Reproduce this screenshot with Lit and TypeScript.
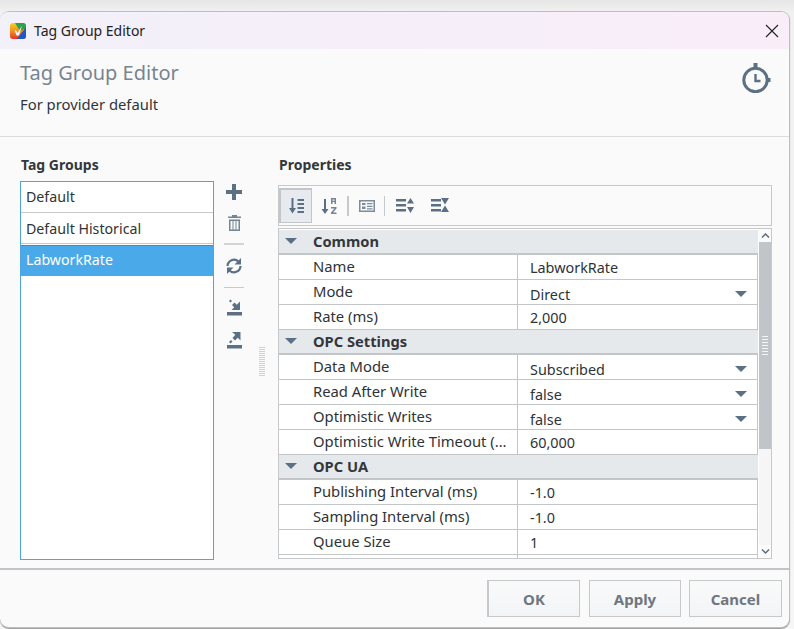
import { LitElement, html, css, svg } from 'lit';
import { customElement } from 'lit/decorators.js';

type Row =
  | { group: string }
  | { name: string; value: string; combo?: boolean };

const ROWS: Row[] = [
  { group: 'Common' },
  { name: 'Name', value: 'LabworkRate' },
  { name: 'Mode', value: 'Direct', combo: true },
  { name: 'Rate (ms)', value: '2,000' },
  { group: 'OPC Settings' },
  { name: 'Data Mode', value: 'Subscribed', combo: true },
  { name: 'Read After Write', value: 'false', combo: true },
  { name: 'Optimistic Writes', value: 'false', combo: true },
  { name: 'Optimistic Write Timeout (...', value: '60,000' },
  { group: 'OPC UA' },
  { name: 'Publishing Interval (ms)', value: '-1.0' },
  { name: 'Sampling Interval (ms)', value: '-1.0' },
  { name: 'Queue Size', value: '1' },
  { name: '', value: '' },
];

const icon = (w: number, h: number, body: unknown) =>
  html`<svg width=${w} height=${h} viewBox="0 0 ${w} ${h}" fill="#5b7084">${body}</svg>`;

const ICONS = {
  plus: svg`<path d="M6 0h4v6h6v4h-6v6H6v-6H0V6h6z"/>`,
  trash: svg`<path d="M4 0h5v1.500h4V3H0V1.500h4zM1 4.500h11V16H1zM2.500 6v8.500h2V6zm3 0v8.500h2V6zm3 0v8.500h2V6z" fill-rule="evenodd" opacity=".85"/>`,
  refresh: svg`<path d="M1.500 8a6.500 6.500 0 0 1 11-4.500" fill="none" stroke="#5b7084" stroke-width="2.200"/><path d="M15 0v6.500H8.500z"/><path d="M14.500 8a6.500 6.500 0 0 1-11 4.500" fill="none" stroke="#5b7084" stroke-width="2.200"/><path d="M1 16V9.500h6.500z"/>`,
  imp: svg`<path d="M0 13h15v3.500H0zM13 2.500V11H4.500l2.700-2.700L5 6l2.500-2.500 2.300 2.300zM2 2l1.500-1.500L5 2 3.500 3.500z"/>`,
  exp: svg`<path d="M0 13h15v3.500H0zM5 0h8.500v8.500l-2.700-2.700L8 8.500 5.500 6l2.800-3.300zM2 10l2-2 1.500 1.500-2 2z"/>`,
  sortAsc: svg`<path d="M3.500 0h2v10H8l-3.500 5.500L1 10h2.500zM9.500 1h6.500v2H9.500zM9.500 5h6.500v2H9.500zM9.500 9h6.500v2H9.500zM9.500 13h6.500v2H9.500z"/>`,
  sortAz: svg`<path d="M3 2h2v10h2.500L4 17 .5 12H3z"/><path d="M10 1h5v6h-1.500V5h-2v2H10zM11.500 2.500v1.200h2V2.500zM10 10h5.500v1.500l-3.500 4h3.500V17H10v-1.500l3.500-4H10z" fill-rule="evenodd" opacity=".85"/>`,
  card: svg`<path d="M0 0h16v12H0zM1.500 1.500v9h13v-9zM3 3h3.500v2H3zM8 3h5.500v1.300H8zM3 6.500h3.500v2.500H3zM8 5.800h5.500v1.300H8zM8 8.300h5.500v1.300H8z" fill-rule="evenodd" opacity=".8"/>`,
  expand: svg`<path d="M0 2h10v2.500H0zM0 7h10v2.500H0zM0 12h10v2.500H0zM11 6.500L14.500 1 18 6.500zM11 10h7l-3.500 6z"/>`,
  collapse: svg`<path d="M0 2h10v2.500H0zM0 7h10v2.500H0zM0 12h10v2.500H0zM10 1h8l-4 6.500zM14 8.500l4 6.500h-8z"/>`,
};

@customElement('app-root')
export class AppRoot extends LitElement {
  static styles = css`
    :host {
      display: block;
      width: 794px;
      height: 629px;
      overflow: hidden;
      background: linear-gradient(#e6e6e6, #f1f1f1 12px, #f6f6f6);
      font-family: 'Noto Sans', 'Open Sans', sans-serif;
      font-size: 14px;
      color: #2e3338;
    }
    .window {
      box-sizing: border-box;
      margin-top: 11px;
      width: 790px;
      height: 617px;
      background: #fafafa;
      border: 1px solid #bcbec2;
      border-left: 0;
      border-radius: 9px;
      box-shadow: 0 1px 1px #9a9a9a;
      overflow: hidden;
      display: flex;
      flex-direction: column;
    }
    .titlebar {
      height: 37px;
      flex: none;
      display: flex;
      align-items: center;
      padding-left: 10px;
      gap: 8px;
      background: linear-gradient(90deg, #f2f0f8, #f9edf8);
      color: #222;
    }
    .logo { flex: none; }
    .close { margin-left: auto; margin-right: 10px; display: flex; }
    .header {
      height: 88px;
      flex: none;
      box-sizing: border-box;
      border-bottom: 1px solid #dcdcdc;
      padding: 10px 18px 0 20px;
      display: flex;
      justify-content: space-between;
    }
    .heading { font-size: 20px; line-height: 28px; color: #788490; }
    .sub { margin-top: 7px; line-height: 20px; color: #30353a; font-size: 14.800px; }
    .clock { margin-top: 4px; }
    .body {
      flex: 1;
      display: flex;
      padding: 19px 0 0 20px;
      min-height: 0;
    }
    .label { font-weight: 700; font-size: 14px; line-height: 18px; color: #33373b; padding-left: 1px; }
    .left { width: 194px; flex: none; }
    .list {
      box-sizing: border-box;
      margin-top: 7px;
      height: 379px;
      border: 1px solid #4ea6dc;
      background: #fff;
      font-size: 14.200px;
    }
    .item {
      box-sizing: border-box;
      height: 31px;
      padding-left: 5px;
      line-height: 30px;
      border-bottom: 1px solid #c9c9c9;
    }
    .item + .item { line-height: 32px; }
    .item.sel {
      margin-top: 1px;
      height: 31px;
      line-height: 28px;
      background: #4aa9e8;
      color: #fff;
      border: 0;
      border-top: 1px solid #3b8fc8;
    }
    .actions {
      width: 40px;
      flex: none;
      margin-top: 28px;
      display: flex;
      flex-direction: column;
      align-items: center;
      height: 170px;
    }
    .actions .sep { width: 20px; height: 2px; background: #d2d4d6; margin: 12px 0 7px; }
    .actions .sep.low { height: 1px; background: #c8cacc; margin: 13px 0 5px; }
    .actions svg { display: block; }
    .spacer-a { height: 15px; }
    .spacer-b { height: 6px; }
    .spacer-c { height: 16px; }
    .grip-col { width: 24px; flex: none; padding-left: 5px; box-sizing: border-box; }
    .grip {
      width: 6px;
      height: 29px;
      margin-top: 191px;
      background: repeating-linear-gradient(#d0d2d4 0 1px, transparent 1px 2px);
    }
    .right { width: 494px; flex: none; }
    .toolbar {
      box-sizing: border-box;
      margin-top: 11px;
      height: 41px;
      border: 1px solid #c6c8ca;
      display: flex;
      align-items: center;
    }
    .tb {
      width: 33px;
      height: 35px;
      box-sizing: border-box;
      display: flex;
      align-items: center;
      justify-content: center;
      flex: none;
    }
    .tb.on { background: #e7ebef; border: 2px solid #c3c6c9; border-right-width: 1px; border-bottom-width: 1px; }
    .tb.card { width: 31px; }
    .tb.wide { width: 35px; }
    .tb-sep { width: 2px; height: 20px; background: #c6c9cc; margin: 0 2px; flex: none; }
    .tb-sep.thin { width: 1px; }
    .table {
      box-sizing: border-box;
      margin-top: 2px;
      height: 331px;
      border: 1px solid #c6c8ca;
      display: flex;
      background: #fff;
      overflow: hidden;
    }
    .rows { width: 480px; box-sizing: border-box; flex: none; overflow: hidden; padding: 1px 1px 0 0; }
    .group {
      box-sizing: border-box;
      height: 25px;
      padding-bottom: 2px;
      display: flex;
      align-items: center;
      background: #e6e9ec;
      border-bottom: 2px solid #c3c6c9;
      font-weight: 700;
      font-size: 14.700px;
      color: #33373b;
    }
    .group svg { margin: 0 16px 0 6px; flex: none; }
    .row {
      box-sizing: border-box;
      height: 25px;
      display: grid;
      grid-template-columns: 239px 1fr;
      border-bottom: 1px solid #c3c6c9;
    }
    .name {
      box-sizing: border-box;
      padding-left: 34px;
      border-right: 1px solid #c3c6c9;
      line-height: 23px;
      white-space: nowrap;
      overflow: hidden;
      font-size: 14.800px;
    }
    .value {
      box-sizing: border-box;
      padding: 0 10px 0 12px;
      line-height: 23px;
      display: flex;
      align-items: center;
      justify-content: space-between;
      border-right: 1px solid #c3c6c9;
      font-size: 14.400px;
    }
    .value.combo { line-height: 29px; align-items: flex-start; }
    .value.combo svg { margin-top: 11px; }
    .scroll {
      flex: 1;
      display: flex;
      flex-direction: column;
      background: #f6f6f6;
    }
    .arrow { height: 13px; flex: none; display: flex; align-items: center; justify-content: center; background: #fbfbfb; }
    .thumb {
      height: 207px;
      flex: none;
      background: #c1c5c9;
      display: flex;
      align-items: center;
      justify-content: center;
    }
    .thumb i {
      display: block;
      width: 6px;
      height: 21px;
      margin-top: 1px;
      background: repeating-linear-gradient(#f4f5f6 0 1px, transparent 1px 3px);
    }
    .track { flex: 1; }
    .footer {
      flex: none;
      height: 59px;
      box-sizing: border-box;
      margin-top: 8px;
      border-top: 2px solid #c1c4c8;
      display: flex;
      justify-content: flex-end;
      gap: 8px;
      padding: 10px 7px 0 0;
    }
    button {
      box-sizing: border-box;
      width: 93px;
      height: 37px;
      font: 700 15px 'Noto Sans', 'Open Sans', sans-serif;
      color: #6f7680;
      background: linear-gradient(#fafafa, #f2f4f6);
      border: 1px solid #c6c8cb;
      padding: 1px 0 0;
    }
    button.primary { border-left-width: 2px; }
    button.mid { width: 92px; margin-left: 1px; }
  `;

  private caret() {
    return html`<svg width="12" height="6" viewBox="0 0 12 6" fill="#5b7084"><path d="M0 0h12L6 6z"/></svg>`;
  }

  private renderRow(r: Row) {
    if ('group' in r) {
      return html`<div class="group">${this.caret()}${r.group}</div>`;
    }
    return html`<div class="row">
      <div class="name">${r.name}</div>
      <div class="value ${r.combo ? 'combo' : ''}">
        <span>${r.value}</span>
        ${r.combo ? this.caret() : ''}
      </div>
    </div>`;
  }

  render() {
    return html`
      <div class="window">
        <div class="titlebar">
          <svg class="logo" width="16" height="16" viewBox="0 0 16 16">
            <defs>
              <linearGradient id="warm" x1="0" y1="0" x2="0" y2="1">
                <stop offset="0" stop-color="#f5d21f"/>
                <stop offset=".55" stop-color="#f08a1d"/>
                <stop offset="1" stop-color="#e5302a"/>
              </linearGradient>
            </defs>
            <rect width="16" height="16" rx="3" fill="url(#warm)"/>
            <path d="M5 0h8a3 3 0 0 1 3 3v2l-6 3z" fill="#2f9e4f"/>
            <path d="M16 4v9a3 3 0 0 1-3 3H7z" fill="#1d57c8"/>
            <path d="M12 2.500L9 12.500H6.500L4.500 7l2 1 1 2z" fill="#f4f4f4"/>
          </svg>
          <span>Tag Group Editor</span>
          <span class="close">
            <svg width="14" height="14" viewBox="0 0 14 14" fill="none" stroke="#222" stroke-width="1.100"><path d="M1 1l12 12M13 1L1 13"/></svg>
          </span>
        </div>
        <div class="header">
          <div>
            <div class="heading">Tag Group Editor</div>
            <div class="sub">For provider default</div>
          </div>
          <svg class="clock" width="29" height="30" viewBox="0 0 29 30" fill="none" stroke="#5b7084">
            <circle cx="13.500" cy="17" r="11.700" stroke-width="3"/>
            <path d="M11.500 0h4v5h-4zM24 15h4.500v4H24z" fill="#5b7084" stroke="none"/>
            <path d="M13.500 11v7h5" stroke-width="2.400"/>
          </svg>
        </div>
        <div class="body">
          <div class="left">
            <div class="label">Tag Groups</div>
            <div class="list">
              <div class="item">Default</div>
              <div class="item">Default Historical</div>
              <div class="item sel">LabworkRate</div>
            </div>
          </div>
          <div class="actions">
            ${icon(16, 16, ICONS.plus)}
            <div class="spacer-a"></div>
            ${icon(13, 16, ICONS.trash)}
            <div class="sep"></div>
            <div class="spacer-b"></div>
            ${icon(16, 16, ICONS.refresh)}
            <div class="sep low"></div>
            <div class="spacer-b"></div>
            ${icon(15, 17, ICONS.imp)}
            <div class="spacer-c"></div>
            ${icon(15, 17, ICONS.exp)}
          </div>
          <div class="grip-col"><div class="grip"></div></div>
          <div class="right">
            <div class="label">Properties</div>
            <div class="toolbar">
              <div class="tb on">${icon(16, 16, ICONS.sortAsc)}</div>
              <div class="tb">${icon(16, 18, ICONS.sortAz)}</div>
              <div class="tb-sep"></div>
              <div class="tb card">${icon(16, 12, ICONS.card)}</div>
              <div class="tb-sep thin"></div>
              <div class="tb wide">${icon(18, 17, ICONS.expand)}</div>
              <div class="tb wide">${icon(18, 17, ICONS.collapse)}</div>
            </div>
            <div class="table">
              <div class="rows">${ROWS.map((r) => this.renderRow(r))}</div>
              <div class="scroll">
                <div class="arrow"><svg width="9" height="5" viewBox="0 0 9 5" fill="none" stroke="#5b7084" stroke-width="1.500"><path d="M1 4.500l3.500-3.500 3.500 3.500"/></svg></div>
                <div class="thumb"><i></i></div>
                <div class="track"></div>
                <div class="arrow"><svg width="9" height="5" viewBox="0 0 9 5" fill="none" stroke="#5b7084" stroke-width="1.500"><path d="M1 .5l3.500 3.500 3.500-3.500"/></svg></div>
              </div>
            </div>
          </div>
        </div>
        <div class="footer">
          <button class="primary">OK</button>
          <button class="mid">Apply</button>
          <button>Cancel</button>
        </div>
      </div>
    `;
  }
}
